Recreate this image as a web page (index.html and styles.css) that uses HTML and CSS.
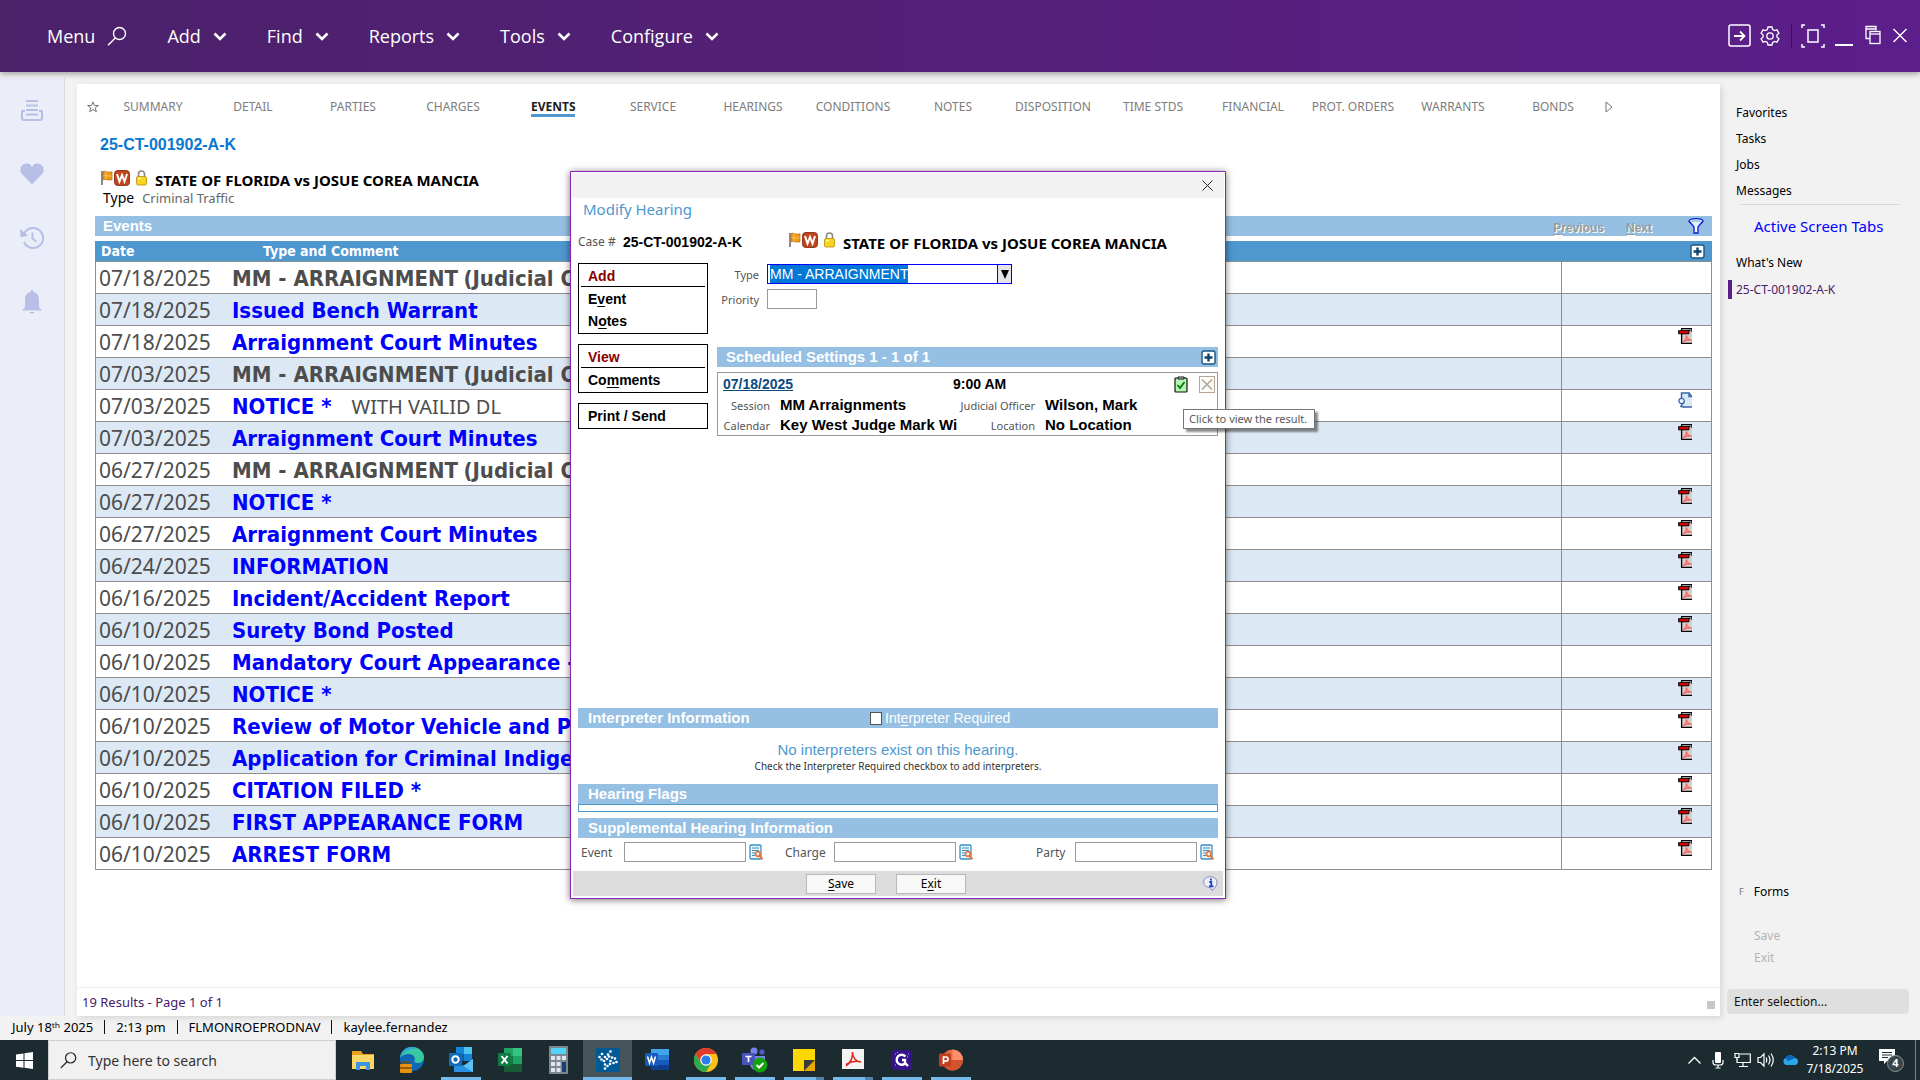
FILE: index.html
```html
<!DOCTYPE html>
<html lang="en">
<head>
<meta charset="utf-8">
<title>25-CT-001902-A-K - Events</title>
<link rel="stylesheet" href="styles.css">
</head>
<body>
<svg class="sprite" aria-hidden="true">
  <symbol id="chev" viewBox="0 0 14 10"><path d="M1.5 2.500l5.500 5.500L12.500 2.500" fill="none" stroke="#fff" stroke-width="2.600"/></symbol>
  <symbol id="search" viewBox="0 0 20 20"><circle cx="12.500" cy="7.500" r="6" fill="none" stroke="currentColor" stroke-width="1.400"/><path d="M8.300 12L1 19.300" stroke="currentColor" stroke-width="1.500"/></symbol>
  <symbol id="flag" viewBox="0 0 13 16"><path d="M1 1h2v14H1z" fill="#8b8b8b"/><path d="M3 1.500c3-1 4 1.500 9 .3v8c-4 1-6-1.200-9 0z" fill="#f09a1c" stroke="#b5670a" stroke-width=".7"/><path d="M6 1.500v8M3.500 5.500l8 .5" stroke="#ffc65e" stroke-width=".8"/></symbol>
  <symbol id="wbox" viewBox="0 0 16 16"><rect x=".6" y=".6" width="14.800" height="14.800" rx="3" fill="#c0461c" stroke="#8a2f12"/><path d="M3 4l2.500 7.500L8 5l2.500 6.500L13 4" fill="none" stroke="#fff" stroke-width="2"/></symbol>
  <symbol id="lock" viewBox="0 0 11 16"><path d="M2.500 7V4a3 3 0 0 1 6 0v3" fill="none" stroke="#8c8a80" stroke-width="1.600"/><rect x=".5" y="6.500" width="10" height="8.500" rx="1.500" fill="#f7d51d" stroke="#b58d00" stroke-width=".8"/><path d="M2 8.500h3" stroke="#fff6b0" stroke-width="1.500"/></symbol>
  <symbol id="plus" viewBox="0 0 15 15"><rect x="1" y="1" width="13" height="13" rx="2" fill="#fff" stroke="#1b5580" stroke-width="1.400"/><path d="M7.500 3.500v8M3.500 7.500h8" stroke="#0b4470" stroke-width="2.400"/></symbol>
  <symbol id="pdf" viewBox="0 0 14 16"><path d="M3 15.500V.7h11v15z" fill="#d0d0d0"/><path d="M14 15.300H3.600V.7H14" fill="none" stroke="#000" stroke-width="1.300"/><path d="M10.500 2.500h2" stroke="#000" stroke-width="1.200"/><path d="M13 1h1v3h-1z" fill="#e00"/><path d="M.6 2.700h10.300v3.100H.6z" fill="#f00000" stroke="#000"/><path d="M4.500 14.500c2-1 4-4 4-7 .5 2.500 3 4.500 5.500 4.500-3-.5-6 0-8.500 1.200" fill="none" stroke="#ff5a4d" stroke-width="1.200"/></symbol>
  <symbol id="docfind" viewBox="0 0 14 16"><path d="M3.500 1H11l3 3.500V15H7l-3-3z" fill="#dbe8f6"/><path d="M14 4.500h-3V1H3.500v5M5 15h9" fill="none" stroke="#3667a8" stroke-width="1.500"/><path d="M11 1l3 3.500" stroke="#3667a8" stroke-width="1.200"/><circle cx="3.600" cy="9" r="2.700" fill="#f4f9ff" stroke="#3667a8" stroke-width="1.300"/><path d="M4.500 11.500l-1.500 3 3 .5" fill="none" stroke="#3667a8" stroke-width="1.600"/></symbol>
  <symbol id="lookup" viewBox="0 0 14 16"><rect x="1" y="1" width="11" height="14" rx="1" fill="#eaf4fb" stroke="#3d8fc4" stroke-width="1.300"/><path d="M3 4h7M3 6.500h7M3 9h3.500M3 11.500h3" stroke="#3d8fc4"/><circle cx="8.800" cy="10" r="2.300" fill="#fff" stroke="#e8763a" stroke-width="1.700"/><path d="M10.500 12l3 3.300" stroke="#e8763a" stroke-width="2"/></symbol>
</svg>

<header class="topbar">
  <nav class="menu" aria-label="Main menu">
    <button>Menu <svg class="ic-search"><use href="#search"/></svg></button>
    <button>Add <svg class="ic-chev"><use href="#chev"/></svg></button>
    <button>Find <svg class="ic-chev"><use href="#chev"/></svg></button>
    <button>Reports <svg class="ic-chev"><use href="#chev"/></svg></button>
    <button>Tools <svg class="ic-chev"><use href="#chev"/></svg></button>
    <button>Configure <svg class="ic-chev"><use href="#chev"/></svg></button>
  </nav>
  <div class="window-tools">
    <button aria-label="Sign out"><svg width="24" height="24" viewBox="0 0 24 24"><rect x="1" y="1" width="21" height="21" rx="2" fill="none" stroke="#fff" stroke-width="1.500"/><path d="M6 12h10M12 7.500l4.500 4.500-4.500 4.500" fill="none" stroke="#fff" stroke-width="1.800"/></svg></button>
    <button aria-label="Settings"><svg width="20" height="20" viewBox="0 0 20 20" fill="none" stroke="#fff" stroke-width="1.300"><path d="M8 1h4l.6 2.600 1.800 1 2.500-.8 2 3.400-2 1.800v2l2 1.800-2 3.400-2.500-.8-1.800 1L12 19H8l-.6-2.600-1.800-1-2.500.8-2-3.400 2-1.800V9l-2-1.800 2-3.400 2.500.8 1.800-1z"/><circle cx="10" cy="10" r="3.200"/></svg></button>
    <i class="tools-rule"></i>
    <button aria-label="Full screen"><svg width="24" height="24" viewBox="0 0 24 24" fill="none" stroke="#fff" stroke-width="1.500"><path d="M4 1H1v3M20 1h3v3M4 23H1v-3M20 23h3v-3"/><rect x="7" y="6" width="10" height="12"/></svg></button>
    <button aria-label="Minimize"><svg width="18" height="24" viewBox="0 0 18 24"><path d="M0 21h18" stroke="#fff" stroke-width="2"/></svg></button>
    <button aria-label="Restore"><svg width="16" height="24" viewBox="0 0 16 24" fill="none" stroke="#fff" stroke-width="1.300"><path d="M5 14.500H1V2.500h10v4M1 5h10"/><rect x="5" y="7.500" width="10" height="12"/><path d="M5 10h10"/></svg></button>
    <button aria-label="Close"><svg width="14" height="24" viewBox="0 0 14 24"><path d="M.5 5l13 13M13.500 5l-13 13" stroke="#fff" stroke-width="1.400"/></svg></button>
  </div>
</header>

<div class="workspace">
  <aside class="rail">
    <button aria-label="Queue"><svg width="24" height="24" viewBox="0 0 24 24" fill="none" stroke="#b7bfe6" stroke-width="2"><path d="M6 3h12M6 7.500h12M6 12h12M6 16.500h12"/><path d="M5 13H2v7q0 2 2 2h16q2 0 2-2v-7h-3"/></svg></button>
    <button aria-label="Favorites"><svg width="24" height="24" viewBox="0 0 24 24"><path d="M12 22.500L2 12C-2 7 2 1 7 1.500c2.500.2 4 1.500 5 3.500 1-2 2.500-3.300 5-3.500C22 1 26 7 22 12z" fill="#b7bfe6"/></svg></button>
    <button aria-label="History"><svg width="24" height="24" viewBox="0 0 24 24" fill="none" stroke="#b7bfe6" stroke-width="2"><path d="M4 8a10 10 0 1 1 0 8"/><path d="M12.500 6.500v6l4 3"/><path d="M0 3l.5 8.500L8 9.500z" fill="#b7bfe6" stroke="none"/></svg></button>
    <button aria-label="Alerts"><svg width="24" height="24" viewBox="0 0 24 24"><path d="M12 0c1 0 1.500.8 1.500 2C18 3 19 6 19 10v7l3 3.500H2L5 17v-7c0-4 1-7 5.500-8 0-1.200.5-2 1.500-2zM9.500 22h5c-.5 2-4.500 2-5 0z" fill="#b7bfe6"/></svg></button>
  </aside>

  <main class="panel">
    <nav class="tabs" aria-label="Case tabs">
      <button class="star" aria-label="Favorite"><svg width="12" height="12" viewBox="0 0 12 12"><path d="M6 .8l1.400 3.700h4L8.200 6.800l1.200 4L6 8.500l-3.400 2.300 1.200-4L.6 4.500h4z" fill="none" stroke="#777"/></svg></button>
      <a href="#">SUMMARY</a><a href="#">DETAIL</a><a href="#">PARTIES</a><a href="#">CHARGES</a><a href="#" class="on">EVENTS</a><a href="#">SERVICE</a><a href="#">HEARINGS</a><a href="#">CONDITIONS</a><a href="#">NOTES</a><a href="#">DISPOSITION</a><a href="#">TIME STDS</a><a href="#">FINANCIAL</a><a href="#">PROT. ORDERS</a><a href="#">WARRANTS</a><a href="#">BONDS</a>
      <button class="more" aria-label="More tabs"><svg width="8" height="12" viewBox="0 0 8 12"><path d="M1 1l6 5-6 5z" fill="none" stroke="#777"/></svg></button>
    </nav>

    <section class="case">
      <h1 class="case-no">25-CT-001902-A-K</h1>
      <div class="caption"><svg class="ic-flag"><use href="#flag"/></svg><svg class="ic-w"><use href="#wbox"/></svg><svg class="ic-lock"><use href="#lock"/></svg><strong>STATE OF FLORIDA vs JOSUE COREA MANCIA</strong></div>
      <div class="case-type"><span>Type</span><em>Criminal Traffic</em></div>

      <div class="bar events-bar"><h2>Events</h2><button class="page" disabled><u>P</u>revious</button><button class="page" disabled><u>N</u>ext</button><button class="filter" aria-label="Filter"><svg width="16" height="16" viewBox="0 0 16 16"><ellipse cx="8" cy="3" rx="7" ry="2.300" fill="#e9f6ff" stroke="#1414d8" stroke-width="1.200"/><path d="M1 3l5 6v6h4V9l5-6" fill="#e9f6ff" stroke="#1414d8" stroke-width="1.300"/><ellipse cx="8" cy="3" rx="5.500" ry="1.200" fill="#9fd0f0"/></svg></button></div>

      <table class="events">
        <thead><tr><th class="c-date">Date</th><th class="c-desc">Type and Comment</th><th class="c-act"><button aria-label="Add event"><svg class="ic-plus"><use href="#plus"/></svg></button></th></tr></thead>
        <tbody>
          <tr><td>07/18/2025</td><td><b>MM - ARRAIGNMENT</b> <b>(Judicial Officer)</b></td><td></td></tr>
          <tr><td>07/18/2025</td><td><a href="#">Issued Bench Warrant</a></td><td></td></tr>
          <tr><td>07/18/2025</td><td><a href="#">Arraignment Court Minutes</a></td><td><svg class="ic-doc"><use href="#pdf"/></svg></td></tr>
          <tr><td>07/03/2025</td><td><b>MM - ARRAIGNMENT</b> <b>(Judicial Officer)</b></td><td></td></tr>
          <tr><td>07/03/2025</td><td><a href="#">NOTICE *</a><span class="note">WITH VAILID DL</span></td><td><svg class="ic-doc"><use href="#docfind"/></svg></td></tr>
          <tr><td>07/03/2025</td><td><a href="#">Arraignment Court Minutes</a></td><td><svg class="ic-doc"><use href="#pdf"/></svg></td></tr>
          <tr><td>06/27/2025</td><td><b>MM - ARRAIGNMENT</b> <b>(Judicial Officer)</b></td><td></td></tr>
          <tr><td>06/27/2025</td><td><a href="#">NOTICE *</a></td><td><svg class="ic-doc"><use href="#pdf"/></svg></td></tr>
          <tr><td>06/27/2025</td><td><a href="#">Arraignment Court Minutes</a></td><td><svg class="ic-doc"><use href="#pdf"/></svg></td></tr>
          <tr><td>06/24/2025</td><td><a href="#">INFORMATION</a></td><td><svg class="ic-doc"><use href="#pdf"/></svg></td></tr>
          <tr><td>06/16/2025</td><td><a href="#">Incident/Accident Report</a></td><td><svg class="ic-doc"><use href="#pdf"/></svg></td></tr>
          <tr><td>06/10/2025</td><td><a href="#">Surety Bond Posted</a></td><td><svg class="ic-doc"><use href="#pdf"/></svg></td></tr>
          <tr><td>06/10/2025</td><td><a href="#">Mandatory Court Appearance -</a></td><td></td></tr>
          <tr><td>06/10/2025</td><td><a href="#">NOTICE *</a></td><td><svg class="ic-doc"><use href="#pdf"/></svg></td></tr>
          <tr><td>06/10/2025</td><td><a href="#">Review of Motor Vehicle and P</a></td><td><svg class="ic-doc"><use href="#pdf"/></svg></td></tr>
          <tr><td>06/10/2025</td><td><a href="#">Application for Criminal Indige</a></td><td><svg class="ic-doc"><use href="#pdf"/></svg></td></tr>
          <tr><td>06/10/2025</td><td><a href="#">CITATION FILED *</a></td><td><svg class="ic-doc"><use href="#pdf"/></svg></td></tr>
          <tr><td>06/10/2025</td><td><a href="#">FIRST APPEARANCE FORM</a></td><td><svg class="ic-doc"><use href="#pdf"/></svg></td></tr>
          <tr><td>06/10/2025</td><td><a href="#">ARREST FORM</a></td><td><svg class="ic-doc"><use href="#pdf"/></svg></td></tr>
        </tbody>
      </table>
    </section>
    <footer class="results"><span>19 Results - Page 1 of 1</span><i></i></footer>
  </main>

  <aside class="side">
    <nav class="links"><a href="#">Favorites</a><a href="#">Tasks</a><a href="#">Jobs</a><a href="#">Messages</a></nav>
    <h2>Active Screen Tabs</h2>
    <nav class="links"><a href="#">What's New</a><a href="#" class="current"><span>25-CT-001902-A-K</span></a></nav>
    <div class="forms"><kbd>F</kbd><a href="#">Forms</a></div>
    <div class="commands"><button disabled>Save</button><button disabled>Exit</button></div>
    <input type="text" class="selection" placeholder="Enter selection..." aria-label="Enter selection">
  </aside>
</div>

<footer class="status"><span>July 18ᵗʰ 2025</span><i></i><span>2:13 pm</span><i></i><span>FLMONROEPRODNAV</span><i></i><span>kaylee.fernandez</span></footer>

<div class="taskbar">
  <button class="start" aria-label="Start"><svg width="17" height="17" viewBox="0 0 17 17"><path d="M0 2.400l7.500-1v6.700H0zM8.500 1.200L17 0v8.100H8.500zM0 9h7.500v6.700l-7.500-1zM8.500 9H17v8l-8.500-1.200z" fill="#fff"/></svg></button>
  <div class="find"><svg class="ic-find"><use href="#search"/></svg><input type="text" placeholder="Type here to search" aria-label="Type here to search"></div>
  <div class="apps">
    <button aria-label="File Explorer"><svg width="24" height="24" viewBox="0 0 24 24"><path d="M1 3h9l2 3h11v15H1z" fill="#e9a21b"/><path d="M1 7h22v14H1z" fill="#ffd766"/><path d="M5 22v-8h14v8h-4v-4H9v4z" fill="#3b95e0"/></svg></button>
    <button aria-label="Edge"><svg width="26" height="28" viewBox="0 0 26 28"><circle cx="13" cy="13" r="12" fill="#1067b8"/><path d="M1 12C2 4 8 1 13 1c7 0 12 5 12 10 0 4-3 6-6 6-3 0-4-1-3.500-2.500C17 11 14 8 10 8c-4 0-8 2-9 4z" fill="#38c9a0"/><path d="M1 12C2 5 7 1 13 1c3 0 4 1 5 2C9 2 4 7 1 12z" fill="#2fa6e0"/><rect x="1" y="18" width="12" height="9" rx="1" fill="#e8920f"/><path d="M4 18v-2h6v2M1 22h12" fill="none" stroke="#7a4a00" stroke-width="1.300"/></svg></button>
    <button aria-label="Outlook" class="run"><svg width="24" height="26" viewBox="0 0 24 26"><path d="M7 0h16v14H7z" fill="#1484d8"/><path d="M15 0h8v7h-8z" fill="#50c3f2"/><path d="M7 7h8v7H7z" fill="#0f5ea8"/><path d="M5 12l10 7 9-7v13H5z" fill="#2893e3"/><path d="M24 12v13L14 19z" fill="#5bc0f5"/><rect y="6" width="13" height="13" rx="1" fill="#0f6cbd"/><circle cx="6.500" cy="12.500" r="3.200" fill="none" stroke="#fff" stroke-width="2"/></svg></button>
    <button aria-label="Excel"><svg width="24" height="26" viewBox="0 0 24 26"><path d="M6 1h18v24H6z" fill="#21a366"/><path d="M15 1h9v8h-9z" fill="#33c481"/><path d="M6 9h9v8H6z" fill="#107c41"/><path d="M6 17h18v8H6z" fill="#185c37"/><rect y="6" width="13" height="13" rx="1" fill="#107c41"/><path d="M3.500 9l6 7.500M9.500 9l-6 7.500" stroke="#fff" stroke-width="2"/></svg></button>
    <button aria-label="Calculator"><svg width="20" height="28" viewBox="0 0 20 28"><rect width="19" height="28" rx="1" fill="#7d8790"/><path d="M2 2h15v6H2z" fill="#50d5fa"/><path d="M2 10h4v4H2zM7.500 10h4v4h-4zM13 10h4v4h-4zM2 16h4v4H2zM7.500 16h4v4h-4zM2 22h4v4H2zM7.500 22h4v4h-4z" fill="#e2e6ea"/><path d="M13 16h4v10h-4z" fill="#1b3f74"/></svg></button>
    <button aria-label="Case manager" class="run active"><svg width="24" height="24" viewBox="0 0 24 24"><path d="M0 0h24v24H0z" fill="#005a96"/><path d="M14.500 3.500h0M12 6.500h0M9 9h0M6 6h0M3.500 9h0M5.500 11.500h0M8 13h0M11 11h0M13 8.500h0M16 9.500h0M19 10.500h0M20.500 14h0M17.500 15h0M14.500 13h0M14 16h0M11.500 18h0M9 20.500h0M9 16.500h0" stroke="#fff" stroke-width="2.700" stroke-linecap="round"/></svg></button>
    <button aria-label="Word"><svg width="24" height="24" viewBox="0 0 24 24"><path d="M6 1h18v6H6z" fill="#41a5ee"/><path d="M6 7h18v5H6z" fill="#2b7cd3"/><path d="M6 12h18v5H6z" fill="#185abd"/><path d="M6 17h18v5H6z" fill="#103f91"/><rect y="5" width="13" height="13" rx="1" fill="#185abd"/><path d="M2.500 8.500L4.500 15l2-6 2 6 2-6.500" fill="none" stroke="#fff" stroke-width="1.500"/></svg></button>
    <button aria-label="Chrome" class="run"><svg width="24" height="24" viewBox="0 0 24 24"><circle cx="12" cy="12" r="12" fill="#fbc116"/><path d="M1.600 6A12 12 0 0 1 22.400 6H12l-5.200 9z" fill="#e33b2e"/><path d="M1.600 6A12 12 0 0 0 12 24l5.200-9H6.800z" fill="#2da94f"/><circle cx="12" cy="12" r="5.800" fill="#fff"/><circle cx="12" cy="12" r="4.600" fill="#2a7de9"/></svg></button>
    <button aria-label="Teams" class="run"><svg width="26" height="26" viewBox="0 0 26 26"><circle cx="12" cy="4" r="3.500" fill="#7b83eb"/><circle cx="20" cy="5" r="2.600" fill="#5059c9"/><path d="M8 9h15v8l-6 7c-6 0-9-4-9-7z" fill="#7b83eb"/><rect y="6" width="13" height="12" rx="1" fill="#4b53bc"/><path d="M3.500 9.500h6M6.500 9.500V15" stroke="#fff" stroke-width="1.700"/><circle cx="18" cy="18" r="7.500" fill="#13a10e"/><path d="M14.500 18l2.500 2.500 4.500-4.500" fill="none" stroke="#fff" stroke-width="2"/></svg></button>
    <button aria-label="Sticky Notes" class="run multi"><svg width="22" height="22" viewBox="0 0 22 22"><path d="M0 0h22v11L11 22H0z" fill="#ffd800"/><path d="M11 11h11L11 22z" fill="#3b3b3b"/><path d="M22 11v11H11z" fill="#e8a800"/></svg></button>
    <button aria-label="Acrobat" class="run multi"><svg width="22" height="24" viewBox="0 0 22 24"><path d="M0 1h22v20H0z" fill="#f3f3f3"/><path d="M4 18c4-3 7-8 6.500-14 0 6 4 10 8.500 10-5-1.500-10-.5-15 2.500" fill="none" stroke="#e0201b" stroke-width="1.500"/></svg></button>
    <button aria-label="Recorder" class="run"><svg width="20" height="20" viewBox="0 0 20 20"><rect width="20" height="20" rx="4" fill="#35148a"/><path d="M13.500 6.500A5 5 0 1 0 13 13.500V10h-3M13 13l3 3" fill="none" stroke="#fff" stroke-width="2.400"/><path d="M3 4h1M5 2.500h1M16 4h1M15 7h1M3 15h1" stroke="#c7a6ff"/></svg></button>
    <button aria-label="PowerPoint" class="run"><svg width="24" height="24" viewBox="0 0 24 24"><circle cx="13.500" cy="12" r="10.500" fill="#ed6c47"/><path d="M13.500 1.500A10.500 10.500 0 0 1 24 12H13.500z" fill="#ff8f6b"/><path d="M24 12a10.500 10.500 0 0 1-21 0z" fill="#d35230"/><rect y="5.500" width="12" height="13" rx="1" fill="#c43e1c"/><path d="M4.500 16V9h2.500a2 2 0 0 1 0 4.200H4.500" fill="none" stroke="#fff" stroke-width="1.700"/></svg></button>
  </div>
  <div class="tray">
    <svg class="t-more" width="13" height="8" viewBox="0 0 13 8"><path d="M.5 7.500l6-6 6 6" fill="none" stroke="#fff" stroke-width="1.300"/></svg>
    <svg class="t-mic" width="12" height="18" viewBox="0 0 12 18"><rect x="3" y="1" width="6" height="11" rx="1" fill="#fff"/><path d="M1 9v2.500Q1 14 4 14h4q3 0 3-2.500V9M6 14v3M3.500 17h5" fill="none" stroke="#fff" stroke-width="1.200"/></svg>
    <svg width="17" height="16" viewBox="0 0 17 16" fill="none" stroke="#fff" stroke-width="1.200"><path d="M6 2h10.300v8.500H3V7M9 10.500V14M5 14.500h9"/><path d="M1 1.500h4v4H1zM3 5.500V8"/></svg>
    <svg width="17" height="16" viewBox="0 0 17 16" fill="none" stroke="#fff" stroke-width="1.200"><path d="M1 5.500h2.500L7 2v12l-3.500-3.500H1zM9 5.500q1.500 2.500 0 5M11.500 3.500q3 4.500 0 9M14 1.500q4.500 6.500 0 13"/></svg>
    <svg width="17" height="12" viewBox="0 0 17 12"><path d="M4 11a3.800 3.800 0 0 1-.5-7A5.500 5.500 0 0 1 13 4a3.600 3.600 0 0 1 .5 7z" fill="#28a8ea"/><path d="M3.500 4A5.500 5.500 0 0 1 13 4L6 7z" fill="#0a64b8"/></svg>
    <div class="clock"><span>2:13 PM</span><span>7/18/2025</span></div>
    <div class="alerts"><svg width="17" height="17" viewBox="0 0 17 17"><path d="M0 1h16v12H8l-3 3v-3H0z" fill="#fff"/><path d="M3 4.500h10M3 7h10M3 9.500h6" stroke="#1b2b30"/></svg><b>4</b></div>
    <i class="desk"></i>
  </div>
</div>

<div class="dialog" role="dialog" aria-labelledby="dlg-title">
  <div class="dlg-top"><button aria-label="Close dialog"><svg width="11" height="11" viewBox="0 0 11 11"><path d="M.5.500l10 10M10.500.500l-10 10" stroke="#222"/></svg></button></div>
  <div class="dlg-body">
    <h2 id="dlg-title">Modify Hearing</h2>
    <div class="dlg-case"><span class="lbl">Case #</span><strong class="num">25-CT-001902-A-K</strong><div class="caption"><svg class="ic-flag"><use href="#flag"/></svg><svg class="ic-w"><use href="#wbox"/></svg><svg class="ic-lock"><use href="#lock"/></svg><strong>STATE OF FLORIDA vs JOSUE COREA MANCIA</strong></div></div>
    <div class="dlg-main">
      <div class="actions">
        <div class="group"><h3>Add</h3><div><button>E<u>v</u>ent</button><button>N<u>o</u>tes</button></div></div>
        <div class="group"><h3>View</h3><div><button>Co<u>m</u>ments</button></div></div>
        <button class="print">Print / Send</button>
      </div>
      <div class="fields">
        <div class="line"><label for="type">Type</label><div class="combo"><input id="type" type="text" value="MM - ARRAIGNMENT"><button aria-label="Open list"><svg width="8" height="9" viewBox="0 0 8 9"><path d="M0 0h8L4 9z"/></svg></button></div></div>
        <div class="line"><label for="priority">Priority</label><input id="priority" class="box priority" type="text"></div>
        <div class="bar sched-bar"><h3>Scheduled Settings 1 - 1 of 1</h3><button aria-label="Add setting"><svg class="ic-plus"><use href="#plus"/></svg></button></div>
        <div class="setting">
          <div class="when"><a href="#">07/18/2025</a><b>9:00 AM</b>
            <button aria-label="View result"><svg width="14" height="17" viewBox="0 0 14 17"><rect x="1" y="2" width="12" height="14" rx="1" fill="#b4f7b4" stroke="#111" stroke-width="1.200"/><path d="M4 3V1h6v2z" fill="#ddd" stroke="#111"/><path d="M3.500 9l2.500 3 4.500-6" fill="none" stroke="#0a7a0a" stroke-width="1.800"/></svg></button>
            <button aria-label="Remove setting"><svg width="16" height="17" viewBox="0 0 16 17"><rect x=".5" y=".5" width="15" height="16" fill="#fbfbf9" stroke="#b5a595"/><path d="M3 3.500l10 10M13 3.500l-10 10" stroke="#b5a595" stroke-width="1.600"/></svg></button></div>
          <dl><dt>Session</dt><dd>MM Arraignments</dd><dt>Judicial Officer</dt><dd>Wilson, Mark</dd><dt>Calendar</dt><dd>Key West Judge Mark Wi</dd><dt>Location</dt><dd>No Location</dd></dl>
        </div>
      </div>
    </div>
    <div class="bar interp-bar"><h3>Interpreter Information</h3><label><input type="checkbox"><span>Int<u>e</u>rpreter Required</span></label></div>
    <div class="empty"><p>No interpreters exist on this hearing.</p><small>Check the Interpreter Required checkbox to add interpreters.</small></div>
    <div class="bar"><h3>Hearing Flags</h3></div>
    <div class="flags"></div>
    <div class="bar"><h3>Supplemental Hearing Information</h3></div>
    <div class="supp">
      <div class="look"><label for="ev">Event</label><input id="ev" class="box" type="text"><button aria-label="Find event"><svg class="ic-doc"><use href="#lookup"/></svg></button></div>
      <div class="look charge"><label for="ch">Charge</label><input id="ch" class="box" type="text"><button aria-label="Find charge"><svg class="ic-doc"><use href="#lookup"/></svg></button></div>
      <div class="look party"><label for="pa">Party</label><input id="pa" class="box" type="text"><button aria-label="Find party"><svg class="ic-doc"><use href="#lookup"/></svg></button></div>
    </div>
  </div>
  <div class="dlg-foot"><span></span><button class="btn"><u>S</u>ave</button><button class="btn">E<u>x</u>it</button><button class="info" aria-label="Information"><svg width="15" height="15" viewBox="0 0 15 15"><path d="M7 .7C3 .7.700 3 .7 6c0 3.500 3 5.500 6.500 5.300L9 14.500c3-2 5-5 5-8.500 0-3-3-5.300-7-5.300z" fill="#efeefc" stroke="#8c87b8"/><path d="M8 2.500v2M6.300 5.800h2v4.400M6 10.300h4.500" fill="none" stroke="#1540c8" stroke-width="1.800"/></svg></button></div>
  <div class="tooltip" role="tooltip">Click to view the result.</div>
</div>
<script src="script.js"></script>
</body>
</html>
```
FILE: script.js
```js
const type = document.getElementById('type');
type.focus();
type.select();
```
FILE: styles.css
```css
* { box-sizing: border-box; }
body {
  margin: 0;
  min-height: 100vh;
  display: flex;
  flex-direction: column;
  background: #f2f2f2;
  color: #000;
  font: 13px/20px "Noto Sans", "Open Sans", sans-serif;
  overflow-x: hidden;
}
.sprite { display: none; }
button, input { font: inherit; color: inherit; margin: 0; padding: 0; border: 0; background: none; outline: 0; border-radius: 0; }
button { display: inline-flex; align-items: center; }
h1, h2, h3, p, dl, dd { margin: 0; font-weight: normal; }
a { text-decoration: none; color: inherit; }
svg { display: block; flex: none; }
u { text-underline-offset: 2px; }
.ic-chev { width: 14px; height: 10px; }
.ic-search { width: 20px; height: 20px; }
.ic-flag { width: 13px; height: 16px; }
.ic-w { width: 16px; height: 16px; margin-left: 1px; }
.ic-lock { width: 11px; height: 16px; margin-left: 6px; }
.ic-plus { width: 15px; height: 15px; }
.ic-doc { width: 14px; height: 16px; }

.topbar {
  height: 72px;
  display: flex;
  align-items: center;
  justify-content: space-between;
  padding: 0 13px 0 47px;
  background: linear-gradient(90deg, #4b216a, #542078 50%, #5c1e8b);
  box-shadow: 0 2px 6px rgba(0, 0, 0, .35);
  color: #fff;
  z-index: 1;
}
.menu { display: flex; gap: 40px; }
.menu button { gap: 12px; font: 18px/24px "Open Sans", "Noto Sans", sans-serif; }
.window-tools { display: flex; align-items: center; }
.window-tools button:nth-child(2) { margin-left: 8px; }
.tools-rule { width: 1px; height: 24px; background: #391159; margin: 0 9px 0 11px; }
.window-tools button:nth-child(5) { margin-left: 10px; }
.window-tools button:nth-child(n+6) { margin-left: 12px; }

.workspace { flex: 1; display: grid; grid-template-columns: 65px minmax(0, 1fr) 200px; }
.rail {
  margin-top: 6px;
  background: #ebeef8;
  border-right: 1px solid #d9dbe3;
  display: flex;
  flex-direction: column;
  align-items: center;
  gap: 40px;
  padding-top: 20px;
}
.panel {
  margin: 12px 0 0 12px;
  background: #fff;
  box-shadow: 2px 2px 6px rgba(0, 0, 0, .12);
  display: flex;
  flex-direction: column;
}
.tabs { display: flex; height: 46px; padding-top: 16px; font-size: 12px; line-height: 14px; color: #7d7d7d; }
.tabs a { width: 100px; text-align: center; white-space: nowrap; }
.tabs button { height: 14px; }
.tabs .star { width: 26px; padding-left: 10px; }
.tabs .more { padding-left: 2px; }
.tabs .on { color: #1c1c1c; font-weight: bold; width: 44px; margin: 0 28px; height: 17px; border-bottom: 3px solid #4e98cf; }

.case { padding: 5px 8px 0 18px; flex: 1; }
.case-no { font: bold 16px/20px "Liberation Sans", sans-serif; color: #0a78d0; padding-left: 5px; }
.caption { display: flex; align-items: flex-start; height: 20px; }
.case .caption { margin: 15px 0 0 5px; }
.caption strong { font: bold 15px/20px "Noto Sans", sans-serif; white-space: nowrap; margin-left: 8px; }
.case-type { display: flex; gap: 8px; padding-left: 8px; font-size: 14px; line-height: 16px; }
.case-type em { font-style: normal; font-size: 13px; color: #666; }
.bar { height: 20px; background: #95c0e3; color: #fff; display: flex; align-items: center; padding-left: 10px; }
.bar h2, .bar h3 { font: bold 15px/20px "Liberation Sans", sans-serif; }
.events-bar { margin-top: 10px; padding: 0 8px; }
.events-bar h2 { flex: 1; }
.page { font: bold 12px/20px "Liberation Sans", sans-serif; color: #9b9b9b; text-shadow: 1px 1px #fff; margin-right: 22px; padding-top: 3px; }
.filter { margin-left: 14px; }

.events { width: 100%; margin-top: 5px; border-collapse: separate; border-spacing: 0; table-layout: fixed; }
.events th { height: 21px; padding: 0; background: #4e98cf; color: #fff; text-align: left; font: bold 14px/20px "DejaVu Sans Condensed", "DejaVu Sans", sans-serif; border-bottom: 1px solid #8e8e8e; }
.c-date { width: 137px; }
.events th.c-date { padding-left: 6px; }
.events th.c-desc { padding-left: 31px; }
.c-act { width: 151px; }
.events th button { margin-left: 129px; display: flex; }
.events td { height: 32px; padding: 2px 0 0; border-bottom: 1px solid #8e8e8e; white-space: nowrap; overflow: hidden; font: 21px/29px "Noto Sans", sans-serif; color: #4d4d4d; }
.events td:first-child { border-left: 1px solid #8e8e8e; padding-left: 3px; }
.events td:last-child { border-left: 1px solid #8e8e8e; border-right: 1px solid #8e8e8e; vertical-align: top; padding: 2px 0 0 116px; line-height: 16px; }
.events tr:nth-child(even) td { background: #dce9f5; }
.events td b, .events td a { font: bold 22px/20px "DejaVu Sans Condensed", "DejaVu Sans", sans-serif; }
.events td a { color: #00f; }
.events .note { font-size: 20px; line-height: 20px; margin-left: 20px; }

.results { height: 29px; border-top: 1px solid #ececec; display: flex; align-items: center; justify-content: space-between; padding: 0 5px; font-size: 13px; color: #47206b; }
.results i { width: 8px; height: 8px; background: #c8c8c8; margin-top: 6px; }

.side { display: flex; flex-direction: column; padding: 28px 11px 2px 7px; font-size: 12px; }
.links { display: flex; flex-direction: column; }
.links a { line-height: 26px; padding-left: 9px; }
.side h2 { font-size: 15px; line-height: 42px; color: #00f; border-top: 1px solid #d9d9d9; margin: 0 9px 3px 13px; padding-left: 14px; white-space: nowrap; }
.links .current { height: 26px; padding: 4px 0 0 1px; color: #47206b; }
.current span { display: block; height: 19px; line-height: 19px; border-left: 4px solid #5c1e8b; padding-left: 4px; }
.forms { margin-top: auto; display: flex; gap: 10px; padding-left: 12px; line-height: 24px; }
.forms kbd { font: 9px/24px "Noto Sans", sans-serif; color: #777; }
.commands { display: flex; flex-direction: column; align-items: flex-start; padding: 21px 0 20px 27px; color: #b4b4b4; }
.commands button { height: 22px; }
.selection { height: 25px; border-radius: 4px; background: #dfdfdf; padding-left: 7px; }
.selection::placeholder { color: #111; opacity: 1; }

.status { height: 24px; display: flex; align-items: center; gap: 11px; padding: 0 0 2px 12px; }
.status i { width: 1px; height: 14px; background: #111; }

.taskbar { height: 40px; background: #1b2b30; display: flex; color: #fff; }
.start { width: 48px; justify-content: center; }
.find { width: 288px; background: #f1f1f1; border: 1px solid #cfcfcf; color: #222; display: flex; align-items: center; padding-left: 11px; gap: 11px; }
.ic-find { width: 17px; height: 18px; }
.find input { flex: 1; min-width: 0; font-size: 14px; padding-top: 1px; }
.find input::placeholder { color: #333; opacity: 1; }
.apps { display: flex; padding-left: 2px; flex: 1; }
.apps button { width: 49px; height: 40px; justify-content: center; background: no-repeat 5px 37px / 40px 3px; }
.apps .run { background-image: linear-gradient(#76b9ed, #76b9ed); }
.apps .multi { background-image: linear-gradient(90deg, #76b9ed 80%, #4f83ae 80%); }
.apps .active { background-color: #46555a; background-size: 49px 3px; background-position: 0 37px; }
.tray { display: flex; align-items: center; gap: 8px; }
.t-more { margin-right: 3px; }
.t-mic { margin-right: 2px; }
.tray svg:nth-of-type(4) { margin-left: -2px; }
.clock { display: flex; flex-direction: column; width: 60px; font: 12px/18px "Noto Sans", sans-serif; text-align: center; margin-left: -2px; }
.alerts { display: flex; width: 26px; height: 24px; position: relative; margin-left: 6px; }
.alerts b { position: absolute; left: 8px; top: 7px; width: 17px; height: 17px; border-radius: 50%; background: #3b4447; border: 1px solid #8a9295; font-size: 11px; line-height: 14px; text-align: center; }
.desk { width: 5px; height: 40px; border-left: 1px solid #7b868a; margin-left: 2px; }

.dialog {
  position: absolute;
  left: 570px;
  top: 171px;
  width: 656px;
  padding: 1px;
  background: #fff;
  border: 1px solid #8a25b8;
  box-shadow: 0 1px 7px rgba(0, 0, 0, .55);
  z-index: 5;
}
.dlg-top { height: 25px; background: #f2f2f2; display: flex; justify-content: flex-end; padding-right: 11px; }
.dlg-body { padding: 0 6px; }
.dlg-body > h2 { font-size: 15px; line-height: 22px; color: #4e98cf; padding-left: 5px; }
.dlg-case { display: flex; align-items: center; height: 24px; margin: 10px 0 9px; }
.lbl, .look label { font-size: 12px; color: #555; white-space: nowrap; }
.line label, dt { font-size: 11px; color: #555; white-space: nowrap; }
.lbl { width: 45px; }
.num { font: bold 14px/24px "Liberation Sans", sans-serif; width: 165px; }
.dlg-case .caption strong { line-height: 22px; }
.dlg-main { display: grid; grid-template-columns: 130px minmax(0, 1fr); gap: 9px; min-height: 445px; align-items: start; }
.actions { display: flex; flex-direction: column; gap: 10px; font: bold 14px/22px "Liberation Sans", sans-serif; }
.group { border: 1px solid #000; }
.group h3 { font: inherit; color: #8b0000; padding-left: 7px; margin: 0 2px; border-bottom: 1px solid #000; height: 23px; line-height: 24px; }
.group div { padding: 1px 9px; display: flex; flex-direction: column; align-items: flex-start; }
.actions button { display: block; height: 22px; }
.actions .print { border: 1px solid #000; height: 26px; padding-left: 9px; text-align: left; }
.fields { padding-top: 1px; }
.line { display: grid; grid-template-columns: 42px auto; justify-content: start; gap: 8px; margin-bottom: 5px; height: 20px; }
.line label { text-align: right; line-height: 22px; }
.combo { display: flex; width: 245px; height: 20px; border: 1px solid #00f; }
.combo input { flex: 1; min-width: 0; padding-left: 2px; font: 14px/18px "Liberation Sans", sans-serif; }
.combo input::selection { background: #0078d7; color: #fff; }
.combo button { width: 14px; border-left: 1px solid #00f; background: #e4e4ea; justify-content: center; }
.box { border: 1px solid #9a9a9a; width: 122px; height: 20px; background: #fff; }
.priority { width: 50px; }
.sched-bar { margin-top: 38px; padding: 0 2px 0 9px; justify-content: space-between; }
.setting { margin-top: 5px; height: 64px; border: 1px solid #9a9a9a; }
.when { display: flex; align-items: center; height: 22px; padding: 0 2px 0 5px; font: bold 14px/22px "Liberation Sans", sans-serif; }
.when a { color: #0c4a80; text-decoration: underline; width: 230px; }
.when b { flex: 1; }
.when button + button { margin-left: 11px; }
.setting dl { display: grid; grid-template-columns: 62px 176px 89px 1fr; }
dt { text-align: right; padding-right: 10px; line-height: 22px; height: 20px; }
dd { font: bold 15px/20px "Liberation Sans", sans-serif; white-space: nowrap; }
.interp-bar h3 { width: 282px; }
.interp-bar label { display: flex; align-items: center; gap: 3px; font: 14px/20px "Liberation Sans", sans-serif; }
.interp-bar input { appearance: none; width: 12px; height: 13px; background: #fff; border: 1px solid #555; }
.empty { padding: 12px 0; text-align: center; }
.empty p { font: 15px/20px "Liberation Sans", sans-serif; color: #4e98cf; }
.empty small { display: block; font-size: 10px; line-height: 12px; color: #333; }
.flags { height: 8px; border: 1px solid #4e98cf; margin-bottom: 6px; }
.supp { display: flex; gap: 22px; padding: 4px 4px 9px 3px; }
.look { display: flex; align-items: center; height: 20px; }
.look label { width: 43px; line-height: 18px; padding-top: 2px; }
.look button { margin-left: 3px; }
.look.charge label { width: 49px; }
.party { margin-left: auto; }
.look.party label { width: 39px; }
.dlg-foot { height: 25px; margin: 0 1px 1px; background: #dcdcdc; display: flex; align-items: center; gap: 20px; padding: 0 5px 0 0; }
.dlg-foot span { width: 213px; }
.btn { width: 70px; height: 20px; border: 1px solid #b8b8b8; background: #f8f8f8; display: block; text-align: center; line-height: 18px; font-size: 12px; }
.info { margin-left: auto; }
.tooltip { position: absolute; left: 612px; top: 237px; height: 20px; padding: 0 7px 0 5px; background: #fff; border: 1px solid #767676; box-shadow: 3px 3px 2px rgba(0, 0, 0, .45); font-size: 11px; line-height: 18px; color: #575757; white-space: nowrap; }
```
